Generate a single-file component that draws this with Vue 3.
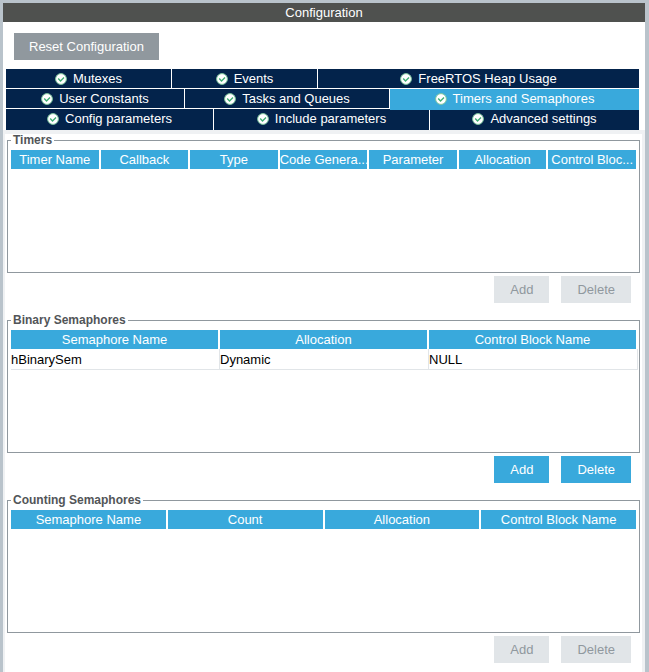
<template>
  <div class="config">
    <h1 class="config-title">Configuration</h1>

    <div class="toolbar">
      <button type="button" class="btn btn--reset">Reset Configuration</button>
    </div>

    <div class="tabs" role="tablist">
      <div v-for="(row, i) in tabRows" :key="i" class="tab-row">
        <button
          v-for="tab in row"
          :key="tab.label"
          type="button"
          role="tab"
          class="tab"
          :class="{ 'tab--active': tab.label === activeTab }"
          :style="{ flexGrow: tab.grow }"
          :aria-selected="tab.label === activeTab"
          @click="activeTab = tab.label"
        >
          <svg class="tab-icon" viewBox="0 0 12 12" aria-hidden="true">
            <circle cx="6" cy="6" r="5.4" fill="#fff" stroke="#7cc69c" stroke-width="1" />
            <path d="M3.2 5.6 L5.5 7.9 L9 4.4" fill="none" stroke="#3fae73" stroke-width="1.4" />
          </svg>
          <span>{{ tab.label }}</span>
        </button>
      </div>
    </div>

    <div class="panel">
      <section v-for="group in groups" :key="group.title" class="group">
        <fieldset class="group-box">
          <legend>{{ group.title }}</legend>
          <table>
            <thead>
              <tr>
                <th v-for="col in group.columns" :key="col" scope="col">{{ col }}</th>
              </tr>
            </thead>
            <tbody>
              <tr v-for="(row, r) in group.rows" :key="r">
                <td v-for="(cell, c) in row" :key="c">{{ cell }}</td>
              </tr>
            </tbody>
          </table>
        </fieldset>
        <div class="group-actions">
          <button type="button" class="btn" :disabled="!group.rows.length">Add</button>
          <button type="button" class="btn" :disabled="!group.rows.length">Delete</button>
        </div>
      </section>
    </div>
  </div>
</template>

<script setup>
import { ref } from 'vue'

const activeTab = ref('Timers and Semaphores')

// grow = share of the row taken by the tab
const tabRows = [
  [
    { label: 'Mutexes', grow: 165 },
    { label: 'Events', grow: 145 },
    { label: 'FreeRTOS Heap Usage', grow: 321 },
  ],
  [
    { label: 'User Constants', grow: 178 },
    { label: 'Tasks and Queues', grow: 204 },
    { label: 'Timers and Semaphores', grow: 249 },
  ],
  [
    { label: 'Config parameters', grow: 207 },
    { label: 'Include parameters', grow: 215 },
    { label: 'Advanced settings', grow: 209 },
  ],
]

const groups = [
  {
    title: 'Timers',
    columns: ['Timer Name', 'Callback', 'Type', 'Code Genera...', 'Parameter', 'Allocation', 'Control Bloc...'],
    rows: [],
  },
  {
    title: 'Binary Semaphores',
    columns: ['Semaphore Name', 'Allocation', 'Control Block Name'],
    rows: [['hBinarySem', 'Dynamic', 'NULL']],
  },
  {
    title: 'Counting Semaphores',
    columns: ['Semaphore Name', 'Count', 'Allocation', 'Control Block Name'],
    rows: [],
  },
]
</script>

<style>
body {
  margin: 0;
}
</style>

<style scoped>
.config {
  box-sizing: border-box;
  display: flex;
  flex-direction: column;
  min-height: 100vh;
  border: solid #b9c3cb;
  border-width: 3px 4px 0 3px;
  background: #fff;
  color: #000;
  font: 13px/19px "Liberation Sans", Arial, sans-serif;
}

.config-title {
  margin: 0;
  background: #4f514f;
  color: #fff;
  font-size: 13px;
  font-weight: 400;
  text-align: center;
}

.toolbar {
  padding: 11px 11px 9px;
}

.btn {
  display: block;
  height: 27px;
  padding: 0 16px;
  border: 0;
  background: #39a9dc;
  color: #fff;
  font: inherit;
}

.btn--reset {
  padding: 0 15px;
  background: #90989e;
}

.btn:disabled {
  background: #e1e5e8;
  color: #90989e;
}

.tabs {
  padding: 0 6px 0 3px;
}

.tab-row {
  display: flex;
  gap: 1px;
  margin-bottom: 1px;
}

.tab-row:last-child {
  margin-bottom: 0;
}

.tab {
  display: flex;
  flex: 1 1 0;
  align-items: center;
  justify-content: center;
  gap: 6px;
  min-width: 0;
  padding: 0;
  border: 0;
  background: #03234b;
  color: #fff;
  font: inherit;
  white-space: nowrap;
}

.tab-row:last-child .tab {
  padding-bottom: 2px;
}

/* selected tab reaches over the divider below it */
.tab--active {
  z-index: 1;
  margin-bottom: -2px;
  padding-bottom: 2px;
  background: #39a9dc;
}

.tab-icon {
  flex: none;
  width: 12px;
  height: 12px;
}

.panel {
  display: flex;
  flex: 1;
  flex-direction: column;
  gap: 11px;
  padding: 0 2px;
  border: solid #eff1f3;
  border-width: 4px 3px 0 2px;
}

.group-box {
  box-sizing: border-box;
  min-width: 0;
  min-height: 139px;
  margin: 0;
  padding: 3px;
  border: 1px solid #90989e;
}

legend {
  padding: 0 2px;
  color: #525558;
  font-size: 12px;
  font-weight: 700;
  line-height: 13px;
}

table {
  width: calc(100% + 2px);
  table-layout: fixed;
  border-collapse: separate;
  border-spacing: 0;
}

th {
  padding: 0;
  border-right: 2px solid #fff;
  background: #39a9dc;
  color: #fff;
  font-weight: 400;
  text-align: center;
  white-space: nowrap;
}

td {
  padding: 1px 0 0;
  border-right: 1px solid #e1e5e8;
  border-bottom: 1px solid #e1e5e8;
}

.group-actions {
  display: flex;
  justify-content: flex-end;
  gap: 12px;
  padding: 3px 9px 0 0;
}
</style>
